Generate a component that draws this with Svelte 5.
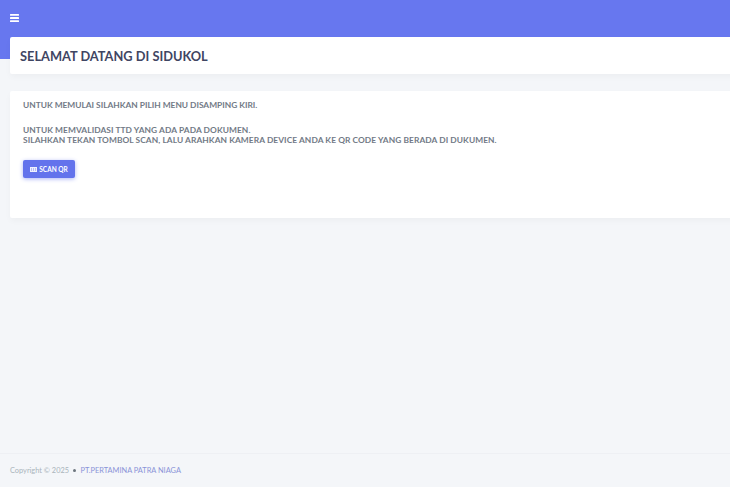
<script lang="ts">
  const intro = 'UNTUK MEMULAI SILAHKAN PILIH MENU DISAMPING KIRI.';
  const steps = [
    'UNTUK MEMVALIDASI TTD YANG ADA PADA DOKUMEN.',
    'SILAHKAN TEKAN TOMBOL SCAN, LALU ARAHKAN KAMERA DEVICE ANDA KE QR CODE YANG BERADA DI DUKUMEN.'
  ];
</script>

<div class="page">
  <header class="navbar">
    <button class="menu-toggle" aria-label="Toggle menu">
      <svg width="9" height="8" viewBox="0 0 9 8" aria-hidden="true">
        <rect y="0" width="9" height="1.8" rx="0.5" />
        <rect y="3.1" width="9" height="1.8" rx="0.5" />
        <rect y="6.2" width="9" height="1.8" rx="0.5" />
      </svg>
    </button>
  </header>

  <main class="content">
    <div class="section-header">
      <h1>SELAMAT DATANG DI SIDUKOL</h1>
    </div>

    <section class="card">
      <p class="intro">{intro}</p>
      <p class="steps">
        {#each steps as line}
          <span>{line}</span>
        {/each}
      </p>
      <button class="btn">
        <svg width="7" height="5" viewBox="0 0 7 5" aria-hidden="true">
          <path d="M0 0h7v5H0z M1.4 1v3h0.4V1z M3.2 1v3h0.4V1z M5 1v3h0.4V1z" fill-rule="evenodd" />
        </svg>
        SCAN QR
      </button>
    </section>
  </main>

  <footer class="footer">
    <span class="copy">Copyright © 2025</span>
    <span class="dot"></span>
    <span class="company">PT.PERTAMINA PATRA NIAGA</span>
  </footer>
</div>

<style>
  :global(body) {
    margin: 0;
    background: #f4f6f9;
    overflow: hidden;
  }

  .page {
    height: 487px;
    display: flex;
    flex-direction: column;
    font-family: "Lato", "Noto Sans", sans-serif;
    background: #f4f6f9;
    overflow: hidden;
  }

  .navbar {
    height: 59px;
    flex: none;
    background: #6777ef;
    display: flex;
    align-items: flex-start;
    padding: 13px 0 0 10px;
    box-sizing: border-box;
  }

  .menu-toggle {
    display: flex;
    padding: 0;
    border: 0;
    background: none;
    margin-top: 1px;
  }

  .menu-toggle svg {
    fill: #fff;
  }

  .content {
    flex: 1;
    margin: -22px -20px 0 10px;
    display: flex;
    flex-direction: column;
    gap: 17px;
  }

  .section-header {
    height: 37px;
    box-sizing: border-box;
    background: #fff;
    border-radius: 2px;
    box-shadow: 0 3px 6px rgba(0, 0, 0, 0.03);
    display: flex;
    align-items: center;
    padding-left: 10px;
  }

  h1 {
    margin: 0;
    font-size: 12.8px;
    font-weight: 700;
    color: #3f4562;
  }

  .card {
    height: 127px;
    box-sizing: border-box;
    background: #fff;
    border-radius: 2px;
    box-shadow: 0 3px 6px rgba(0, 0, 0, 0.03);
    padding: 9px 13px;
  }

  p {
    margin: 0;
    font-size: 8.4px;
    line-height: 10px;
    font-weight: 700;
    color: #727a86;
    letter-spacing: 0.07px;
  }

  .intro {
    letter-spacing: -0.01px;
  }

  .steps {
    margin-top: 11px;
    padding-top: 4px;
  }

  .steps span {
    display: block;
  }

  .btn {
    margin-top: 15px;
    width: 52px;
    height: 18px;
    padding: 0;
    border: 0;
    border-radius: 2px;
    background: #6373ec;
    box-shadow: 0 1px 4px #acb5f6;
    color: #fff;
    font-family: inherit;
    font-size: 6.5px;
    font-weight: 700;
    display: flex;
    align-items: center;
    justify-content: center;
    gap: 2px;
  }

  .btn svg {
    fill: #fff;
    opacity: 0.9;
  }

  .footer {
    height: 34px;
    flex: none;
    box-sizing: border-box;
    border-top: 1px solid #eef0f4;
    display: flex;
    align-items: center;
    padding-left: 10px;
    font-size: 7.4px;
    color: #a9b4bb;
  }

  .dot {
    width: 3px;
    height: 3px;
    border-radius: 50%;
    background: #6c757d;
    margin: 0 4.5px 0 4px;
  }

  .company {
    color: #8a94d8;
  }
</style>
